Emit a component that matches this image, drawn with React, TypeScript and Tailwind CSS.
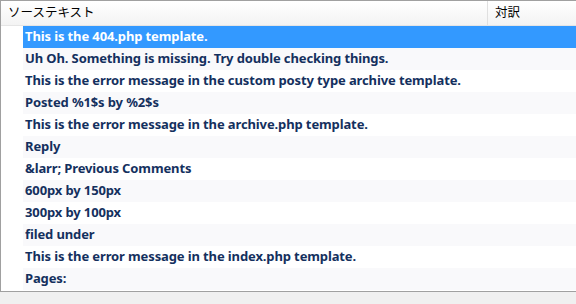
const rows = [
  "This is the 404.php template.",
  "Uh Oh. Something is missing. Try double checking things.",
  "This is the error message in the custom posty type archive template.",
  "Posted %1$s by %2$s",
  "This is the error message in the archive.php template.",
  "Reply",
  "&larr; Previous Comments",
  "600px by 150px",
  "300px by 100px",
  "filed under",
  "This is the error message in the index.php template.",
  "Pages:",
];

function Row({ text, index }: { text: string; index: number }) {
  const selected = index === 0;
  const bg = selected ? "bg-[#3399ff] text-white" : index % 2 === 1 ? "bg-[#f9f9fb] text-[#14305e]" : "bg-white text-[#14305e]";
  return (
    <div className="flex h-[22px]">
      <div className="w-[22px] shrink-0 bg-white" />
      <div className={`flex-1 flex items-center pl-[2px] font-bold text-[13px] tracking-[-0.12px] whitespace-nowrap ${bg}`}>
        {text}
      </div>
    </div>
  );
}

export default function App() {
  return (
    <div
      className="w-[576px] h-[304px] bg-[#f0f0f0] overflow-hidden"
      style={{ fontFamily: '"Noto Sans", "Noto Sans CJK JP", sans-serif' }}
    >
      <div className="h-[292px] border-t border-l border-b border-[#a0a0a0] bg-white flex flex-col">
        <div className="h-[25px] flex items-stretch bg-gradient-to-b from-white to-[#f3f3f3] border-b border-[#e5e5e5] text-[12.5px] text-black">
          <div className="w-[487px] pl-[7px] flex items-center border-r border-[#e0e0e0]">ソーステキスト</div>
          <div className="flex-1 pl-[7px] flex items-center">対訳</div>
        </div>
        <div className="flex flex-col">
          {rows.map((r, i) => (
            <Row key={i} text={r} index={i} />
          ))}
        </div>
      </div>
    </div>
  );
}
